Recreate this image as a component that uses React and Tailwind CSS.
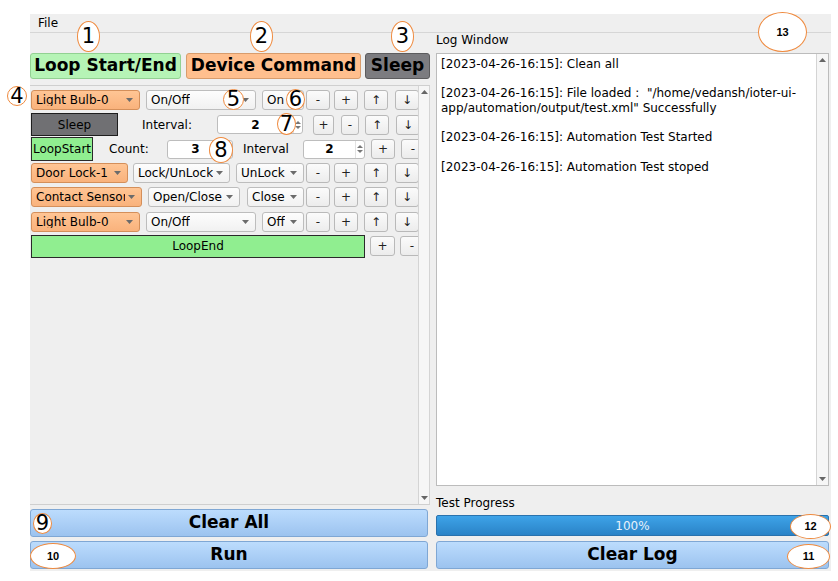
import React from "react";

// small gray dropdown caret used by the Qt style combos
const Caret = () => (
  <svg width="7" height="4" viewBox="0 0 7 4" className="shrink-0">
    <path d="M0 0 L7 0 L3.5 4 Z" fill="#6b6b6b" />
  </svg>
);

const Combo = ({ text, w, ml = 0, orange }) => (
  <div
    className={`h-[20px] shrink-0 flex items-center justify-between pl-[4px] pr-[6px] rounded-[3px] border text-[12px] leading-none whitespace-nowrap overflow-hidden ${
      orange
        ? "bg-gradient-to-b from-[#ffc594] to-[#f9b27c] border-[#d48f5a]"
        : "bg-gradient-to-b from-[#fdfdfd] to-[#f1f1f1] border-[#bdbdbd]"
    }`}
    style={{ width: w, marginLeft: ml }}>
    <span className="overflow-hidden">{text}</span>
    <span className="ml-[3px]">
      <Caret />
    </span>
  </div>
);

const Btn = ({ label, w = 24, ml = 0 }) => (
  <div
    className="h-[20px] shrink-0 flex items-center justify-center rounded-[3px] border border-[#b9b9b9] bg-gradient-to-b from-[#fbfbfb] to-[#ececec] text-[12px] leading-none text-[#222]"
    style={{ width: w, marginLeft: ml }}>
    {label}
  </div>
);

const Spin = ({ value, w, ml = 0 }) => (
  <div
    className="h-[19px] shrink-0 flex items-center rounded-[3px] border border-[#bdbdbd] bg-white"
    style={{ width: w, marginLeft: ml }}>
    <div className="flex-1 text-center text-[12px] font-bold leading-none">
      {value}
    </div>
    <div className="w-[9px] h-full flex flex-col items-center justify-center gap-[2px] border-l border-[#e2e2e2]">
      <svg width="6" height="3" viewBox="0 0 6 3">
        <path d="M0 3 L6 3 L3 0 Z" fill="#777" />
      </svg>
      <svg width="6" height="3" viewBox="0 0 6 3">
        <path d="M0 0 L6 0 L3 3 Z" fill="#777" />
      </svg>
    </div>
  </div>
);

const Arrows = () => (
  <>
    <Btn label="↑" ml={6} />
    <Btn label="↓" ml={7} />
  </>
);

const Scrollbar = ({ className = "" }) => (
  <div
    className={`w-[12px] flex flex-col justify-between items-center bg-[#f6f6f6] border-l border-r border-[#d4d4d4] ${className}`}>
    <div className="h-[12px] flex items-center justify-center">
      <svg width="7" height="4" viewBox="0 0 7 4">
        <path d="M0 4 L7 4 L3.5 0 Z" fill="#666" />
      </svg>
    </div>
    <div className="h-[12px] flex items-center justify-center">
      <svg width="7" height="4" viewBox="0 0 7 4">
        <path d="M0 0 L7 0 L3.5 4 Z" fill="#666" />
      </svg>
    </div>
  </div>
);

// orange annotation bubbles laid over the screenshot
const Mark = ({ n, x, y, w, h, small }) => (
  <div
    className={`absolute flex items-center justify-center rounded-[50%] border-[1.5px] border-[#ef8a3e] bg-white text-black ${
      small
        ? "text-[11px] font-bold font-['Liberation_Sans',sans-serif]"
        : "text-[21px] leading-none"
    }`}
    style={{ left: x, top: y, width: w, height: h }}>
    {n}
  </div>
);

const BlueBtn = ({ label, className = "" }) => (
  <div
    className={`h-[28px] flex items-center justify-center rounded-[3px] border border-[#7fa7d4] bg-gradient-to-b from-[#bcdcfd] to-[#9cc3ef] text-[17px] font-bold ${className}`}>
    {label}
  </div>
);

export default function App() {
  return (
    <div className="relative w-[838px] h-[581px] bg-white font-['DejaVu_Sans',sans-serif] text-black">
      <div className="ml-[30px] pt-[14px]">
        <div className="w-[801px] h-[557px] bg-[#efefef] flex flex-col">
          {/* menu bar */}
          <div className="h-[19px] flex items-center pl-[8px] text-[12px] border-b border-[#d6d6d6]">
            File
          </div>

          <div className="flex flex-1">
            {/* left side */}
            <div className="w-[400px] flex flex-col">
              <div className="flex pt-[20px] h-[46px]">
                <div className="h-[26px] w-[151px] flex items-center justify-center rounded-[3px] border border-[#92d192] bg-[#b6f4b6] text-[17px] font-bold">
                  Loop Start/End
                </div>
                <div className="h-[26px] w-[175px] ml-[5px] flex items-center justify-center rounded-[3px] border border-[#d89c6c] bg-[#ffbf8e] text-[17px] font-bold">
                  Device Command
                </div>
                <div className="h-[26px] w-[65px] ml-[4px] flex items-center justify-center rounded-[3px] border border-[#5c5c5e] bg-[#7c7c80] text-[17px] font-bold">
                  Sleep
                </div>
              </div>

              {/* scroll area */}
              <div className="mt-[6px] h-[420px] flex border-t border-b border-[#cfcfcf]">
                <div className="w-[388px] overflow-hidden pt-[1px] pl-[1px]">
                  <div className="w-[420px] flex flex-col">
                    <div className="h-[25px] flex items-center">
                      <Combo text="Light Bulb-0" w={109} orange />
                      <Combo text="On/Off" w={110} ml={6} />
                      <Combo text="On" w={42} ml={6} />
                      <Btn label="-" ml={2} />
                      <Btn label="+" ml={4} />
                      <Arrows />
                    </div>
                    <div className="h-[25px] flex items-center">
                      <div className="w-[87px] h-[23px] shrink-0 flex items-center justify-center bg-[#707073] border border-[#1e1e1e] text-[12px]">
                        Sleep
                      </div>
                      <span className="ml-[24px] w-[51px] shrink-0 text-[12px]">Interval:</span>
                      <Spin value="2" w={86} ml={24} />
                      <Btn label="+" w={21} ml={10} />
                      <Btn label="-" w={18} ml={7} />
                      <Arrows />
                    </div>
                    <div className="h-[24px] flex items-center">
                      <div className="w-[62px] h-[24px] shrink-0 flex items-center justify-center bg-[#90ee90] border border-[#2a2a2a] text-[12px]">
                        LoopStart
                      </div>
                      <span className="ml-[16px] w-[58px] shrink-0 text-[12px]">Count:</span>
                      <Spin value="3" w={66} />
                      <span className="ml-[10px] w-[60px] shrink-0 text-[12px]">Interval</span>
                      <Spin value="2" w={62} />
                      <Btn label="+" ml={6} />
                      <Btn label="-" ml={6} />
                    </div>
                    <div className="h-[24px] flex items-center">
                      <Combo text="Door Lock-1" w={97} orange />
                      <Combo text="Lock/UnLock" w={97} ml={5} />
                      <Combo text="UnLock" w={68} ml={6} />
                      <Btn label="-" ml={2} />
                      <Btn label="+" ml={4} />
                      <Arrows />
                    </div>
                    <div className="h-[24px] flex items-center">
                      <Combo text="Contact Sensor-2" w={111} orange />
                      <Combo text="Open/Close" w={92} ml={6} />
                      <Combo text="Close" w={57} ml={7} />
                      <Btn label="-" ml={2} />
                      <Btn label="+" ml={4} />
                      <Arrows />
                    </div>
                    <div className="h-[25px] flex items-center">
                      <Combo text="Light Bulb-0" w={109} orange />
                      <Combo text="On/Off" w={110} ml={6} />
                      <Combo text="Off" w={42} ml={6} />
                      <Btn label="-" ml={2} />
                      <Btn label="+" ml={4} />
                      <Arrows />
                    </div>
                    <div className="h-[24px] flex items-center">
                      <div className="w-[334px] h-[23px] shrink-0 flex items-center justify-center bg-[#90ee90] border border-[#2a2a2a] text-[12px]">
                        LoopEnd
                      </div>
                      <Btn label="+" w={25} ml={5} />
                      <Btn label="-" ml={5} />
                    </div>
                  </div>
                </div>
                <Scrollbar className="h-full" />
              </div>

              <div className="flex flex-col gap-[4px] mt-[4px] pr-[2px]">
                <BlueBtn label="Clear All" />
                <BlueBtn label="Run" />
              </div>
            </div>

            {/* right side */}
            <div className="ml-[6px] w-[393px] flex flex-col">
              <div className="h-[20px] text-[12px] leading-[14px]">Log Window</div>
              <div className="h-[433px] flex bg-white border border-[#bcbcbc]">
                <div className="flex-1 px-[4px] pt-[3px] text-[12px] leading-[15px]">
                  <p>[2023-04-26-16:15]: Clean all</p>
                  <p className="mt-[14px]">
                    [2023-04-26-16:15]: File loaded :&nbsp; "/home/vedansh/ioter-ui-
                    <br />
                    app/automation/output/test.xml" Successfully
                  </p>
                  <p className="mt-[14px]">[2023-04-26-16:15]: Automation Test Started</p>
                  <p className="mt-[15px]">[2023-04-26-16:15]: Automation Test stoped</p>
                </div>
                <Scrollbar className="border-r-0" />
              </div>
              <div className="h-[29px] pt-[10px] text-[12px] leading-[14px]">Test Progress</div>
              <div className="h-[21px] flex items-center justify-center rounded-[2px] border border-[#2a72ad] bg-gradient-to-b from-[#3ea3e8] to-[#2a83c7] text-[12px] text-[#e6f1fb]">
                100%
              </div>
              <BlueBtn label="Clear Log" className="mt-[5px]" />
            </div>
          </div>
        </div>
      </div>

      <Mark n="1" x={77} y={21} w={23} h={31} />
      <Mark n="2" x={250} y={21} w={23} h={31} />
      <Mark n="3" x={391} y={21} w={23} h={31} />
      <Mark n="4" x={7} y={86} w={20} h={20} />
      <Mark n="5" x={223} y={89} w={21} h={21} />
      <Mark n="6" x={286} y={89} w={19} h={21} />
      <Mark n="7" x={277} y={113} w={19} h={22} />
      <Mark n="8" x={209} y={137} w={24} h={26} />
      <Mark n="9" x={33} y={513} w={19} h={21} />
      <Mark n="10" x={30} y={543} w={46} h={26} small />
      <Mark n="11" x={787} y={544} w={43} h={25} small />
      <Mark n="12" x={790} y={514} w={41} h={25} small />
      <Mark n="13" x={758} y={12} w={49} h={40} small />
    </div>
  );
}
